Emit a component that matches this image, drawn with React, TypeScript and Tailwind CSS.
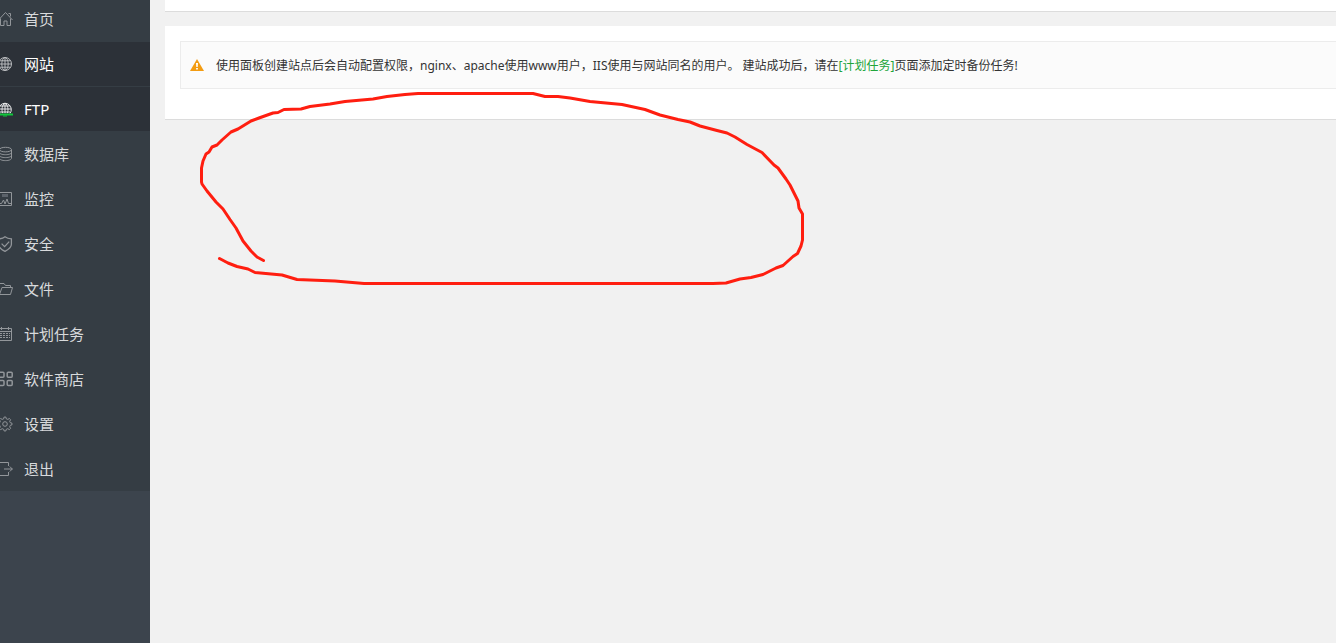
import type { ReactNode } from "react";

type MenuItem = {
  label: string;
  icon: ReactNode;
  active?: boolean;
};

const menu: MenuItem[] = [
  {
    label: "首页",
    icon: (
      <path d="M0.5 9 7.5 1.5l7 7.5M2.5 7.5v7h3.5v-4.5h3v4.5h3.5v-7M10.5 2.5h2v3" />
    ),
  },
  {
    label: "网站",
    active: true,
    icon: (
      <g className="stroke-[#b9bbbe]">
        <circle cx="7" cy="8" r="6.5" />
        <ellipse cx="7" cy="8" rx="3.2" ry="6.5" />
        <path d="M7 1.5v13M.5 8h13M1.5 4.8h11M1.5 11.2h11" />
      </g>
    ),
  },
  {
    label: "FTP",
    active: true,
    icon: (
      <g className="stroke-[#e4e5e6]">
        <path d="M2 12.4A6.3 6.3 0 1 1 12 12.4M4.6 12.2C3.4 8.6 4 4.2 7 2c3 2.2 3.6 6.6 2.4 10.2M7 2v10.2M1 8h12M2 5h10M1.8 11h10.4" />
        <path d="M0 13.5h15" strokeWidth="2" className="stroke-[#0fc63a]" />
        <path d="M5 15h4" className="stroke-[#0fc63a]" />
      </g>
    ),
  },
  {
    label: "数据库",
    icon: (
      <>
        <ellipse cx="7.5" cy="3.6" rx="6" ry="2.3" />
        <path d="M1.5 3.6v8.6c0 1.4 2.6 2.4 6 2.4s6-1 6-2.4V3.6M1.5 6.4c0 1.4 2.6 2.3 6 2.3s6-.9 6-2.3M1.5 9.3c0 1.4 2.6 2.3 6 2.3s6-.9 6-2.3" />
      </>
    ),
  },
  {
    label: "监控",
    icon: (
      <>
        <path d="M.5 1.5h13v13H.5zM.5 12.5h3l2-3.5 1.5 4 2-5 1.5 4.5h3" />
        <path d="M4 4.5h6" strokeWidth="3" className="stroke-[#5c636b]" />
      </>
    ),
  },
  {
    label: "安全",
    icon: (
      <g strokeWidth="1.3">
        <path d="M7 .8C9 2.4 11 2.8 13.4 2.9v5.4c0 3-2.8 5.2-6.4 7-3.6-1.8-6.4-4-6.4-7V2.9C3 2.8 5 2.4 7 .8z" />
        <path d="M3.6 7.6l3 3 4.6-5" />
      </g>
    ),
  },
  {
    label: "文件",
    icon: (
      <path d="M1 13V2.5h5l1.5 2h5v2M1.5 13.5l2.5-7h10.5l-2 7z" />
    ),
  },
  {
    label: "计划任务",
    icon: (
      <>
        <path d="M.5 2.5h13v12H.5zM.5 5.5h13M3.5 1v3M10.5 1v3" />
        <path d="M2 7.5h10M2 9.5h10M2 11.5h10" strokeDasharray="2 1" />
      </>
    ),
  },
  {
    label: "软件商店",
    icon: (
      <g strokeWidth="1.5">
        <rect x="1" y="1.2" width="5" height="5" rx="1" />
        <rect x="9.2" y="1.2" width="5" height="5" rx="1" />
        <rect x="1" y="9.6" width="5" height="5" rx="1" />
        <rect x="9.2" y="9.6" width="5" height="5" rx="1" />
      </g>
    ),
  },
  {
    label: "设置",
    icon: (
      <>
        <path d="M5.8 2 6.2 1h1.6l.5 1.8 1.5.6L11.4 2.5l1.2 1.2-.9 1.6.6 1.4 1.7.5v1.6l-1.7.5-.6 1.5.9 1.6-1.2 1.2-1.6-.9-1.5.6L7.8 15H6.2l-.5-1.7-1.5-.6-1.6.9-1.2-1.2.9-1.6-.6-1.5L0 8.8V7.2l1.7-.5.6-1.4-.9-1.6 1.2-1.2 1.6.9 1.5-.6z" />
        <circle cx="7" cy="8" r="2.3" />
      </>
    ),
  },
  {
    label: "退出",
    icon: (
      <path d="M10.5 5V1.5H.5v13h10V11M6 8h8.5M11.8 5.5 14.3 8l-2.5 2.5" />
    ),
  },
];

const strokePoints =
  "263.5,260.5 257,257 251,251 243,241 236,228 230,219.5 223,209 216,202 207,191 202,184 201.5,182 201.5,168 203,161 206,154 209,152 212,147 217,145 222,140 231,132 238,129 251,121 259,118 273,113 278,112.5 284,109.5 301,109 310,106.5 330,104 345,101.5 373,99 387,96.5 405,94.5 418,93.5 533,93.5 545,96.5 558,96.5 570,98 590,101.5 622,104.5 645,109.5 660,115 678,119.5 690,122 700,126 717,130.5 727,133 735,137 747,144.5 762,152.5 774,165 778,168 786,179 790,185 798,201 799,208 802.5,214 802.5,240 801,246 797.5,253.5 793,256.5 783,265.5 776,268 763,274.5 751,277.5 740,279 726,283 713,283.5 364,283.5 335,281 297,279.5 282,275 255,272.5 248,269 237,266.5 228,263 219.5,258.5";

function Sidebar() {
  return (
    <aside className="w-[150px] shrink-0 overflow-hidden bg-[#3c444d]">
      <ul className="-mt-1 bg-[#353d44]">
        {menu.map((item) => (
          <li key={item.label}>
            <a
              href="#"
              className={`flex h-[45px] items-center gap-2.5 border-t border-[#353d44] text-[15px] ${
                item.active ? "bg-[#2c3138] text-white" : "text-[#d8dadc]"
              }`}
            >
              <svg
                viewBox="2 0 14 16"
                className="h-4 w-3.5 fill-none stroke-[#92969a]"
                aria-hidden="true"
              >
                {item.icon}
              </svg>
              {item.label}
            </a>
          </li>
        ))}
      </ul>
    </aside>
  );
}

function Notice() {
  return (
    <div className="flex h-12 items-center gap-3 border border-r-0 border-[#ececec] bg-[#fbfbfb] pl-[9px] text-xs text-[#333]">
      <svg viewBox="0 0 14 12" className="h-3 w-3.5 shrink-0" aria-hidden="true">
        <path d="M7 0 14 12H0z" fill="#f39c12" />
        <path d="M6 4h2l-.3 4H6.3zM6.1 9h1.8v1.6H6.1z" fill="#fff" />
      </svg>
      <p className="leading-[19px] whitespace-nowrap">
        使用面板创建站点后会自动配置权限，nginx、apache使用www用户，IIS使用与网站同名的用户。 建站成功后，请在
        <a href="#" className="text-[#20a53a]">
          [计划任务]
        </a>
        页面添加定时备份任务!
      </p>
    </div>
  );
}

export default function App() {
  return (
    <div className="relative flex min-h-screen overflow-hidden bg-[#f1f1f1] font-['Noto_Sans','Noto_Sans_CJK_SC',sans-serif]">
      <Sidebar />
      <main className="min-w-0 flex-1 pl-[15px]">
        <div className="h-3 border-b border-[#dcdcdc] bg-white" />
        <section className="mt-3.5 border-b border-[#dcdcdc] bg-white pt-[15px] pb-[30px] pl-[15px]">
          <Notice />
        </section>
      </main>
      <svg
        viewBox="0 0 820 300"
        width="820"
        height="300"
        className="pointer-events-none absolute top-0 left-0 fill-none stroke-[#ff1e10] stroke-3"
        aria-hidden="true"
      >
        <polyline points={strokePoints} strokeLinecap="round" strokeLinejoin="round" />
      </svg>
    </div>
  );
}
